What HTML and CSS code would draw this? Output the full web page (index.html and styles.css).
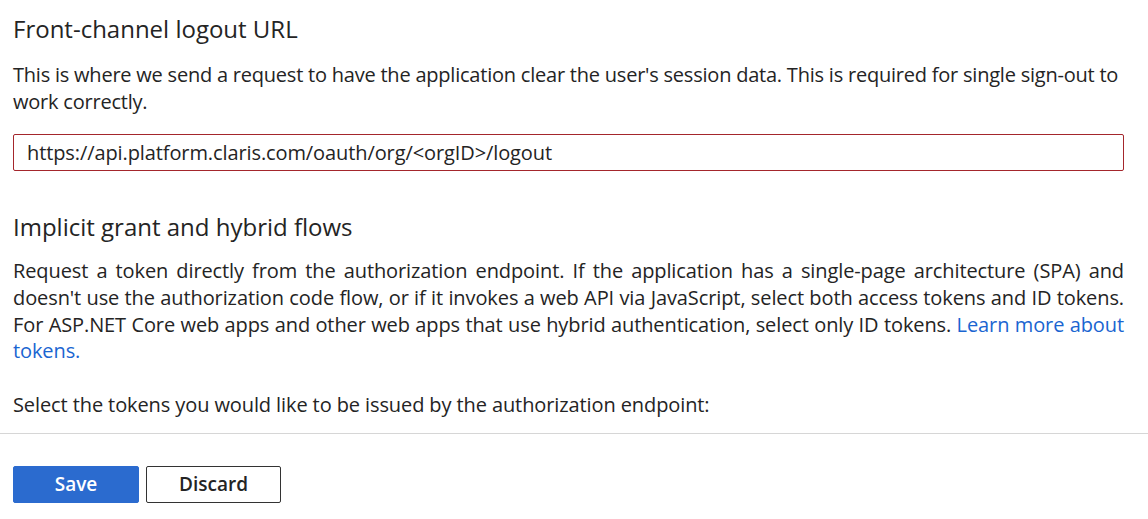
FILE: index.html
```html
<!DOCTYPE html>
<html lang="en">
  <head>
    <meta charset="UTF-8" />
    <title>Authentication</title>
    <link rel="stylesheet" href="styles.css">
  </head>
  <body>
    <div class="content">
      <h2>Front-channel logout URL</h2>
      <p class="tight">This is where we send a request to have the application clear the user's session data. This is required for single sign-out to work correctly.</p>
      <input class="url" type="text" value="https://api.platform.claris.com/oauth/org/<orgID>/logout" />

      <h2 class="second">Implicit grant and hybrid flows</h2>
      <p class="justify">Request a token directly from the authorization endpoint. If the application has a single-page architecture (SPA) and doesn't use the authorization code flow, or if it invokes a web API via JavaScript, select both access tokens and ID tokens. For ASP.NET Core web apps and other web apps that use hybrid authentication, select only ID tokens. <a href="#">Learn more about tokens.</a></p>
      <p class="select">Select the tokens you would like to be issued by the authorization endpoint:</p>
    </div>

    <div class="footer">
      <button class="btn primary">Save</button>
      <button class="btn">Discard</button>
    </div>
  </body>
</html>
```

FILE: styles.css
```css
body {
  margin: 0;
  font-family: "Open Sans", "Noto Sans", sans-serif;
  color: #242424;
  background: #fff;
}

.content {
  width: 1111px;
  padding-left: 13px;
}

h2 {
  font-size: 24px;
  font-weight: 400;
  margin: 0;
  padding-top: 13px;
  line-height: 32px;
}

h2.second {
  padding-top: 40px;
}

p {
  font-size: 20px;
  line-height: 26.67px;
  letter-spacing: -0.1px;
  margin: 17px 0 0;
}

p.tight {
  letter-spacing: -0.22px;
}

.justify {
  margin-top: 15px;
  text-align: justify;
}

a {
  color: #1a65d1;
  text-decoration: none;
}

.select {
  margin-top: 27px;
}

.url {
  display: block;
  box-sizing: border-box;
  width: 100%;
  height: 37px;
  margin-top: 19px;
  padding: 0 13px;
  border: 1px solid #a4262c;
  border-radius: 2px;
  font-family: inherit;
  font-size: 20px;
  letter-spacing: -0.1px;
  color: #242424;
}

.footer {
  margin-top: 14px;
  border-top: 1px solid #d6d6d6;
  padding: 32px 13px;
  display: flex;
  gap: 7px;
}

.btn {
  width: 135px;
  height: 37px;
  background: #fff;
  border: 1px solid #333;
  border-radius: 2px;
  font-family: inherit;
  font-size: 19px;
  font-weight: 600;
  color: #242424;
}

.btn.primary {
  width: 126px;
  background: #2b6bcf;
  border-color: #2b6bcf;
  color: #fff;
}
```
